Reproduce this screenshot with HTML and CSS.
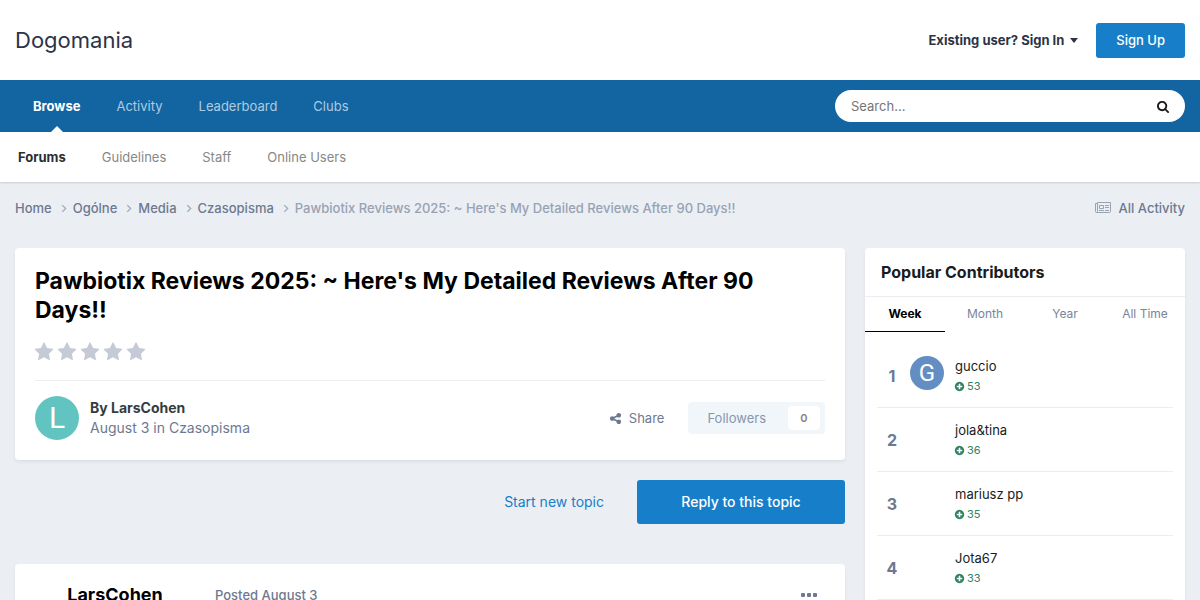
FILE: index.html
```
<!DOCTYPE html>
<html lang="en">
<head>
    <meta charset="UTF-8">
    <meta name="viewport" content="width=device-width, initial-scale=1.0">
    <title>Pawbiotix Reviews 2025: ~ Here's My Detailed Reviews After 90 Days!! - Dogomania</title>
    <link rel="stylesheet" href="styles.css">
</head>
<body>

    <!-- Shared icons -->
    <svg class="sprite" aria-hidden="true">
        <symbol id="star" viewBox="0 0 1792 1792"><path d="M1728 647q0 22-26 48l-363 354 86 500q1 7 1 20 0 21-10.5 35.5t-30.5 14.5q-19 0-40-12l-449-236-449 236q-22 12-40 12-21 0-31.5-14.5t-10.5-35.5q0-6 2-20l86-500-364-354q-25-27-25-48 0-37 56-46l502-73 225-455q19-41 49-41t49 41l225 455 502 73q56 9 56 46z"/></symbol>
        <symbol id="plus" viewBox="0 0 1792 1792"><path d="M1344 960v-128q0-26-19-45t-45-19h-256v-256q0-26-19-45t-45-19h-128q-26 0-45 19t-19 45v256h-256q-26 0-45 19t-19 45v128q0 26 19 45t45 19h256v256q0 26 19 45t45 19h128q26 0 45-19t19-45v-256h256q26 0 45-19t19-45zm320-64q0 209-103 385.5t-279.5 279.5-385.5 103-385.5-103-279.5-279.5-103-385.5 103-385.5 279.5-279.5 385.5-103 385.5 103 279.5 279.5 103 385.5z"/></symbol>
        <symbol id="chevron" viewBox="0 0 6 8"><path d="M1 1l3 3-3 3" fill="none" stroke="currentColor" stroke-width="1.2"/></symbol>
    </svg>

    <header class="site-header">
        <a class="logo" href="#">Dogomania</a>
        <div class="user-nav">
            <a class="sign-in" href="#">Existing user? Sign In
                <svg class="caret" viewBox="0 0 8 5"><path d="M0 0h8L4 5z"/></svg>
            </a>
            <a class="button sign-up" href="#">Sign Up</a>
        </div>
    </header>

    <nav class="primary-nav">
        <ul class="nav-list">
            <li><a class="active" href="#">Browse</a></li>
            <li><a href="#">Activity</a></li>
            <li><a href="#">Leaderboard</a></li>
            <li><a href="#">Clubs</a></li>
        </ul>
        <form class="search" role="search">
            <input type="search" placeholder="Search..." aria-label="Search">
            <button type="button" aria-label="Search">
                <svg viewBox="0 0 1792 1792"><path d="M1152 832q0-185-131.5-316.5t-316.5-131.5-316.5 131.5-131.5 316.5 131.5 316.5 316.5 131.5 316.5-131.5 131.5-316.5zm512 832q0 52-38 90t-90 38q-54 0-90-38l-343-342q-179 124-399 124-143 0-273.5-55.5t-225-150-150-225-55.5-273.5 55.5-273.5 150-225 225-150 273.5-55.5 273.5 55.5 225 150 150 225 55.5 273.5q0 220-124 399l343 343q37 37 37 90z"/></svg>
            </button>
        </form>
    </nav>

    <nav class="sub-nav">
        <ul class="nav-list">
            <li><a class="active" href="#">Forums</a></li>
            <li><a href="#">Guidelines</a></li>
            <li><a href="#">Staff</a></li>
            <li><a href="#">Online Users</a></li>
        </ul>
    </nav>

    <div class="breadcrumb">
        <ul>
            <li><a href="#">Home</a><svg class="chevron"><use href="#chevron"/></svg></li>
            <li><a href="#">Ogólne</a><svg class="chevron"><use href="#chevron"/></svg></li>
            <li><a href="#">Media</a><svg class="chevron"><use href="#chevron"/></svg></li>
            <li><a href="#">Czasopisma</a><svg class="chevron"><use href="#chevron"/></svg></li>
            <li>Pawbiotix Reviews 2025: ~ Here's My Detailed Reviews After 90 Days!!</li>
        </ul>
        <a class="all-activity" href="#">
            <svg viewBox="0 0 16 12" fill="none" stroke="currentColor"><path d="M2.500 1.500h-2v8q0 1 1 1h13q1 0 1-1v-9h-13v9q0 1-1 1M4.500 3.500h4v3h-4zM4 8.500h5M10 3.500h4M10 5.500h4M10 8.500h4"/></svg>
            All Activity
        </a>
    </div>

    <div class="container">
        <main>
            <!-- Topic header -->
            <section class="box topic">
                <h1>Pawbiotix Reviews 2025: ~ Here's My Detailed Reviews After 90 Days!!</h1>
                <div class="rating" role="img" aria-label="Not rated">
                    <svg><use href="#star"/></svg>
                    <svg><use href="#star"/></svg>
                    <svg><use href="#star"/></svg>
                    <svg><use href="#star"/></svg>
                    <svg><use href="#star"/></svg>
                </div>
                <div class="topic-info">
                    <a class="avatar avatar-l" href="#">L</a>
                    <div class="byline">
                        <strong>By <a href="#">LarsCohen</a></strong>
                        <span>August 3 in <a href="#">Czasopisma</a></span>
                    </div>
                    <button type="button" class="share">
                        <svg viewBox="0 0 1792 1792"><path d="M1344 1024q133 0 226.500 93.500t93.500 226.500-93.500 226.500-226.500 93.500-226.500-93.500-93.500-226.500q0-12 2-34l-360-180q-92 86-218 86-133 0-226.500-93.500t-93.500-226.500 93.500-226.500 226.500-93.500q126 0 218 86l360-180q-2-22-2-34 0-133 93.500-226.500t226.500-93.500 226.500 93.500 93.500 226.500-93.500 226.500-226.500 93.500q-126 0-218-86l-360 180q2 22 2 34t-2 34l360 180q92-86 218-86z"/></svg>
                        Share
                    </button>
                    <a class="followers" href="#">Followers <span>0</span></a>
                </div>
            </section>

            <div class="topic-actions">
                <a class="new-topic" href="#">Start new topic</a>
                <a class="button reply" href="#">Reply to this topic</a>
            </div>

            <!-- First post -->
            <article class="box post">
                <h2><a href="#">LarsCohen</a></h2>
                <a class="posted" href="#">Posted August 3</a>
                <button type="button" class="more" aria-label="More options">
                    <svg viewBox="0 0 16 4"><rect width="4" height="4" rx="1"/><rect x="6" width="4" height="4" rx="1"/><rect x="12" width="4" height="4" rx="1"/></svg>
                </button>
            </article>
        </main>

        <aside class="box contributors">
            <h3>Popular Contributors</h3>
            <div class="tabs" role="tablist">
                <button type="button" role="tab" class="active" aria-selected="true">Week</button>
                <button type="button" role="tab">Month</button>
                <button type="button" role="tab">Year</button>
                <button type="button" role="tab">All Time</button>
            </div>
            <ol>
                <li>
                    <strong class="rank">1</strong>
                    <a class="avatar avatar-g" href="#">G</a>
                    <div class="member">
                        <a href="#">guccio</a>
                        <span class="points"><svg><use href="#plus"/></svg>53</span>
                    </div>
                </li>
                <li>
                    <strong class="rank">2</strong>
                    <a class="avatar" href="#" aria-label="jola&amp;tina"></a>
                    <div class="member">
                        <a href="#">jola&amp;tina</a>
                        <span class="points"><svg><use href="#plus"/></svg>36</span>
                    </div>
                </li>
                <li>
                    <strong class="rank">3</strong>
                    <a class="avatar" href="#" aria-label="mariusz pp"></a>
                    <div class="member">
                        <a href="#">mariusz pp</a>
                        <span class="points"><svg><use href="#plus"/></svg>35</span>
                    </div>
                </li>
                <li>
                    <strong class="rank">4</strong>
                    <a class="avatar" href="#" aria-label="Jota67"></a>
                    <div class="member">
                        <a href="#">Jota67</a>
                        <span class="points"><svg><use href="#plus"/></svg>33</span>
                    </div>
                </li>
            </ol>
        </aside>
    </div>

</body>
</html>
```

FILE: styles.css
```
* {
    box-sizing: border-box;
}
body {
    margin: 0;
    background-color: #ebeff4;
    color: #353c41;
    font-family: Inter, sans-serif;
    font-size: 14px;
    line-height: 20px;
}
a {
    color: inherit;
    text-decoration: none;
}
ul, ol {
    list-style: none;
    margin: 0;
    padding: 0;
}
h1, h2, h3 {
    margin: 0;
}
button {
    background: none;
    border: 0;
    padding: 0;
    color: inherit;
    font-family: inherit;
    cursor: pointer;
}
svg {
    fill: currentColor;
    flex-shrink: 0;
}
.sprite {
    display: none;
}
.button {
    display: flex;
    align-items: center;
    justify-content: center;
    background-color: #177ec9;
    border-radius: 3px;
    color: white;
    font-weight: 500;
}

/* Header */
.site-header {
    display: flex;
    align-items: center;
    justify-content: space-between;
    height: 80px;
    padding: 0 15px;
    background-color: white;
    color: #2d3346;
}
.logo {
    font-size: 22px;
}
.user-nav {
    display: flex;
    align-items: center;
    gap: 18px;
    font-size: 13px;
}
.sign-in {
    display: flex;
    align-items: center;
    gap: 6px;
    font-weight: 700;
}
.caret {
    width: 8px;
    height: 5px;
}
.sign-up {
    height: 35px;
    padding: 0 20px;
}

/* Navigation */
.primary-nav {
    display: flex;
    justify-content: space-between;
    align-items: center;
    height: 52px;
    padding: 0 15px;
    background-color: #1365a1;
    color: #adcbe1;
    font-size: 13px;
}
.nav-list {
    display: flex;
    gap: 36px;
}
.primary-nav .nav-list {
    padding-left: 18px;
}
.nav-list a {
    display: block;
    line-height: 52px;
}
.nav-list .active {
    font-weight: 700;
}
.primary-nav .active {
    position: relative;
    color: white;
}
.primary-nav .active::after {
    content: "";
    position: absolute;
    bottom: 0;
    left: 50%;
    margin-left: -6px;
    border: 6px solid transparent;
    border-top: 0;
    border-bottom-color: white;
}
.search {
    display: flex;
    width: 350px;
    height: 32px;
    background-color: white;
    border-radius: 16px;
}
.search input {
    flex: 1;
    min-width: 0;
    padding: 0 16px;
    border: 0;
    outline: 0;
    background: none;
    font-family: inherit;
    font-size: 13px;
}
.search button {
    width: 44px;
    color: #1a1a1a;
}
.search svg {
    display: block;
    width: 13px;
    height: 13px;
    margin: 0 auto;
}
.sub-nav {
    height: 50px;
    padding: 0 18px;
    background-color: white;
    box-shadow: 0 1px 2px rgba(0, 0, 0, 0.15);
    color: #868889;
    font-size: 13px;
}
.sub-nav .nav-list a {
    line-height: 50px;
}
.sub-nav .active {
    color: #2b2e31;
}

/* Breadcrumb */
.breadcrumb {
    display: flex;
    justify-content: space-between;
    padding: 16px 15px 30px;
    color: #6d7990;
    font-size: 13px;
    font-weight: 500;
}
.breadcrumb ul {
    display: flex;
    color: #98a2b3;
}
.breadcrumb li {
    display: flex;
    align-items: center;
}
.breadcrumb li a {
    color: #6d7990;
}
.chevron {
    width: 7px;
    height: 9px;
    margin: 0 5px 0 9px;
    color: #a3abb9;
}
.all-activity {
    display: flex;
    align-items: center;
    gap: 8px;
}
.all-activity svg {
    width: 16px;
    height: 12px;
    color: #98a2b3;
    fill: none;
}

/* Content */
.container {
    display: grid;
    grid-template-columns: minmax(0, 1fr) 320px;
    align-items: start;
    gap: 20px;
    padding: 0 15px;
}
.box {
    background-color: white;
    border-radius: 4px;
    box-shadow: 0 2px 4px -1px rgba(0, 0, 0, 0.1);
}
.topic {
    padding: 19px 20px 20px;
}
.topic h1 {
    color: black;
    font-size: 23px;
    font-weight: 700;
    line-height: 29px;
}
.rating {
    display: flex;
    gap: 3px;
    padding: 17px 0 18px;
    margin-left: -1px;
    color: #c4cad6;
}
.rating svg {
    width: 20px;
    height: 20px;
}
.topic-info {
    display: flex;
    align-items: center;
    padding-top: 15px;
    border-top: 1px solid #ebedf0;
}
.avatar {
    display: flex;
    align-items: center;
    justify-content: center;
    width: 34px;
    height: 34px;
    border-radius: 50%;
    color: white;
    font-family: Roboto, sans-serif;
    font-size: 24px;
}
.avatar-l {
    width: 44px;
    height: 44px;
    background-color: #62c4c0;
    font-size: 30px;
}
.avatar-g {
    background-color: #628ec4;
}
.byline {
    flex: 1;
    margin-left: 11px;
    color: #6d7990;
}
.byline strong, .byline span {
    display: block;
}
.byline strong {
    color: #353c41;
    font-weight: 700;
}
.share {
    display: flex;
    align-items: center;
    gap: 7px;
    margin-right: 24px;
    color: #6d7990;
    font-size: 13px;
}
.share svg {
    width: 13px;
    height: 13px;
}
.followers {
    display: flex;
    align-items: center;
    gap: 22px;
    height: 32px;
    padding: 0 5px 0 19px;
    background-color: #f1f6fa;
    border-radius: 4px;
    color: #8697af;
    font-size: 13px;
}
.followers span {
    width: 32px;
    background-color: white;
    border-radius: 4px;
    color: #868686;
    font-size: 11px;
    font-weight: 600;
    line-height: 24px;
    text-align: center;
}
.topic-actions {
    display: flex;
    align-items: center;
    justify-content: flex-end;
    gap: 33px;
    margin: 20px 0 40px;
}
.new-topic {
    color: #177ec9;
}
.reply {
    width: 208px;
    height: 44px;
}

/* Post */
.post {
    display: flex;
    align-items: center;
    padding: 21px 28px 21px 0;
}
.post h2 {
    width: 200px;
    color: black;
    font-size: 18px;
    font-weight: 700;
    text-align: center;
}
.posted {
    flex: 1;
    color: #6d7990;
    font-size: 13px;
    font-weight: 500;
}
.more {
    color: #6d7990;
}
.more svg {
    display: block;
    width: 16px;
    height: 4px;
}

/* Popular contributors */
.contributors h3 {
    padding: 0 16px;
    border-bottom: 1px solid #ebedf0;
    color: #171c21;
    font-size: 16px;
    font-weight: 700;
    line-height: 48px;
}
.tabs {
    display: grid;
    grid-template-columns: repeat(4, 1fr);
    color: #78849a;
}
.tabs button {
    height: 35px;
    padding-bottom: 2px;
    border-bottom: 1px solid transparent;
    font-size: 12px;
}
.tabs .active {
    border-bottom-color: black;
    color: black;
    font-weight: 700;
}
.contributors ol {
    padding: 12px;
}
.contributors li {
    display: flex;
    align-items: flex-start;
    height: 64px;
    padding-top: 12px;
    border-bottom: 1px solid #ebedf0;
}
.rank {
    width: 30px;
    margin-right: 3px;
    color: #6d7990;
    font-size: 16px;
    font-weight: 700;
    line-height: 40px;
    text-align: center;
}
.member {
    margin-left: 11px;
    color: #171c21;
    font-size: 13px;
    line-height: 20px;
}
.points {
    display: flex;
    align-items: center;
    gap: 2px;
    color: #2f8360;
    font-size: 11px;
}
.points svg {
    width: 11px;
    height: 11px;
    margin-left: -1px;
}
```
